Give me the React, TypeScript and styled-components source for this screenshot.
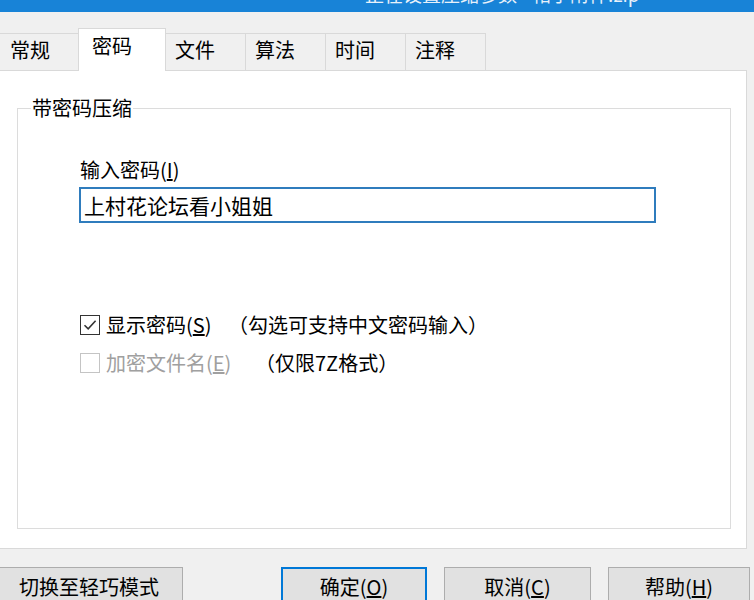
import React from "react";
import styled, { createGlobalStyle } from "styled-components";

const GlobalStyle = createGlobalStyle`
  html, body { margin: 0; padding: 0; background: #f0f0f0; overflow: hidden; }
  body { font-family: "Noto Sans CJK SC", "Microsoft YaHei", sans-serif; color: #000; }
`;

const Window = styled.div`
  width: 754px;
  height: 600px;
  overflow: hidden;
  display: flex;
  flex-direction: column;
  background: #f0f0f0;
`;

const TitleBar = styled.div`
  flex: 0 0 12px;
  height: 12px;
  background: #1883d7;
  overflow: hidden;
  display: flex;
  align-items: flex-end;
  padding-left: 365px;
`;

const TitleText = styled.div`
  color: #e8f1fa;
  font-size: 19px;
  line-height: 20px;
  margin-bottom: 8px;
  white-space: nowrap;
`;

const TabBar = styled.div`
  flex: 0 0 58px;
  height: 58px;
  box-sizing: border-box;
  display: flex;
  align-items: flex-end;
  margin-left: -2px;
`;

const Tab = styled.div<{ $active?: boolean }>`
  position: relative;
  z-index: ${(p) => (p.$active ? 2 : 1)};
  box-sizing: border-box;
  width: ${(p) => (p.$active ? 88 : 81)}px;
  height: ${(p) => (p.$active ? 43 : 37)}px;
  margin-bottom: ${(p) => (p.$active ? -1 : 0)}px;
  margin-left: -1px;
  &:first-child { margin-left: 0; }
  padding: ${(p) => (p.$active ? "5px 0 0 13px" : "4px 0 0 9px")};
  background: ${(p) => (p.$active ? "#ffffff" : "#f0f0f0")};
  border: 1px solid #d9d9d9;
  border-bottom: none;
  font-size: 20px;
  line-height: 24px;
  white-space: nowrap;
  &:first-child { padding-left: 11px; }
`;

const Panel = styled.div`
  flex: 0 0 479px;
  height: 479px;
  box-sizing: border-box;
  width: 749px;
  margin-left: -2px;
  background: #ffffff;
  border: 1px solid #d9d9d9;
  padding: 25px 15px 19px 18px;
  display: flex;
  flex-direction: column;
`;

const GroupBox = styled.fieldset`
  flex: 1;
  margin: 0;
  min-width: 0;
  padding: 0 0 0 13px;
  border: 1px solid #dcdcdc;
`;

const Legend = styled.legend`
  padding: 0 1px;
  font-size: 20px;
  line-height: 24px;
`;

const GroupContent = styled.div`
  padding: 38px 0 0 49px;
  display: flex;
  flex-direction: column;
`;

const FieldLabel = styled.div`
  font-size: 20px;
  line-height: 24px;
`;

const PasswordField = styled.div`
  box-sizing: border-box;
  width: 577px;
  height: 36px;
  margin: 5px 0 0 -1px;
  border: 2px solid #2f7cbd;
  background: #fff;
  padding: 0 0 0 3px;
  font-size: 21px;
  line-height: 32px;
  white-space: nowrap;
`;

const CheckRow = styled.div<{ $gap: number }>`
  display: flex;
  align-items: center;
  height: 24px;
  margin-top: ${(p) => p.$gap}px;
  font-size: 20px;
  line-height: 24px;
  white-space: nowrap;
`;

const Box = styled.span<{ $disabled?: boolean }>`
  box-sizing: border-box;
  width: 20px;
  height: 20px;
  flex: 0 0 20px;
  border: 1px solid ${(p) => (p.$disabled ? "#c4c4c4" : "#333333")};
  background: #fff;
  display: flex;
  align-items: center;
  justify-content: center;
`;

const CheckText = styled.span<{ $width: number; $disabled?: boolean }>`
  width: ${(p) => p.$width}px;
  margin-left: 6px;
  color: ${(p) => (p.$disabled ? "#a0a0a0" : "#000")};
`;

const Hint = styled.span`
  color: #000;
`;

const ButtonRow = styled.div`
  display: flex;
  gap: 17px;
  margin-top: 18px;
  padding-right: 4px;
`;

const Button = styled.div<{ $default?: boolean; $width: number }>`
  box-sizing: border-box;
  width: ${(p) => p.$width}px;
  height: 40px;
  flex: 0 0 auto;
  background: #e1e1e1;
  border: ${(p) => (p.$default ? "2px solid #0078d7" : "1px solid #adadad")};
  display: flex;
  align-items: center;
  justify-content: center;
  font-size: 20px;
  line-height: 24px;
  white-space: nowrap;
  &:first-child { margin-left: -5px; margin-right: auto; }
`;

const Check = () => (
  <svg width="16" height="16" viewBox="0 0 16 16">
    <path d="M2.5 8.2 L6.2 11.8 L13.6 3.8" fill="none" stroke="#333" strokeWidth="1.6" />
  </svg>
);

export default function App() {
  const tabs = ["常规", "密码", "文件", "算法", "时间", "注释"];
  return (
    <>
      <GlobalStyle />
      <Window>
        <TitleBar>
          <TitleText>正在设置压缩参数 - 帖子附件.zip</TitleText>
        </TitleBar>
        <TabBar>
          {tabs.map((t) => (
            <Tab key={t} $active={t === "密码"}>
              {t}
            </Tab>
          ))}
        </TabBar>
        <Panel>
          <GroupBox>
            <Legend>带密码压缩</Legend>
            <GroupContent>
              <FieldLabel>
                输入密码(<u>I</u>)
              </FieldLabel>
              <PasswordField>上村花论坛看小姐姐</PasswordField>
              <CheckRow $gap={90}>
                <Box>
                  <Check />
                </Box>
                <CheckText $width={122}>
                  显示密码(<u>S</u>)
                </CheckText>
                <Hint>（勾选可支持中文密码输入）</Hint>
              </CheckRow>
              <CheckRow $gap={14}>
                <Box $disabled />
                <CheckText $width={149} $disabled>
                  加密文件名(<u>E</u>)
                </CheckText>
                <Hint>（仅限7Z格式）</Hint>
              </CheckRow>
            </GroupContent>
          </GroupBox>
        </Panel>
        <ButtonRow>
          <Button $width={188}>切换至轻巧模式</Button>
          <Button $default $width={146}>
            确定(<u>O</u>)
          </Button>
          <Button $width={147}>
            取消(<u>C</u>)
          </Button>
          <Button $width={142}>
            帮助(<u>H</u>)
          </Button>
        </ButtonRow>
      </Window>
    </>
  );
}
